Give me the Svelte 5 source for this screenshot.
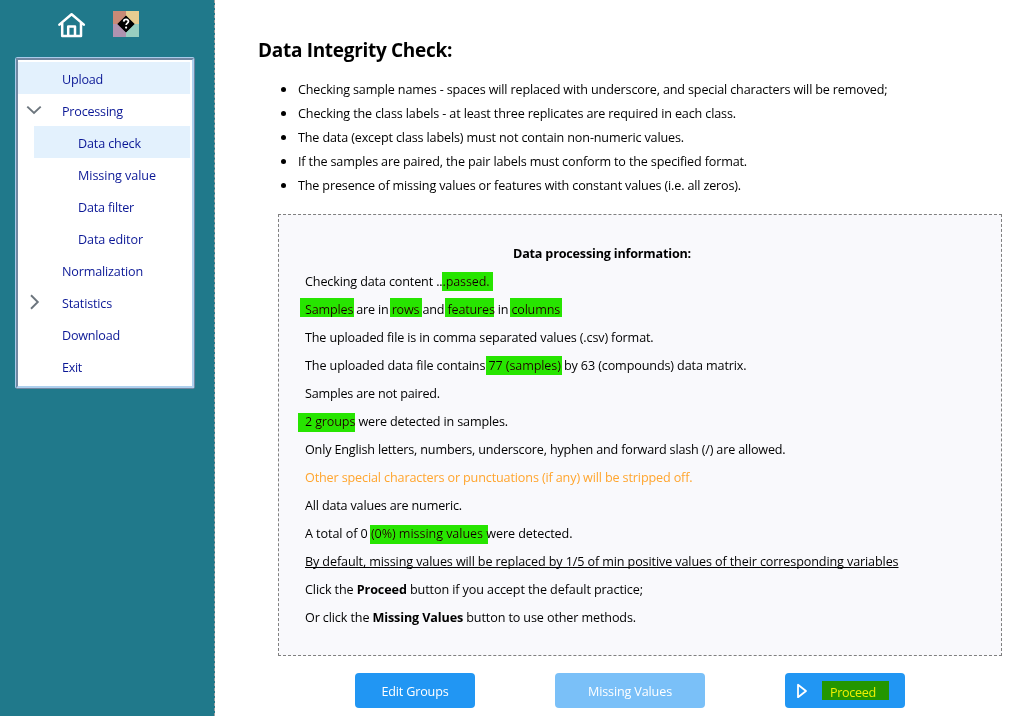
<script>
  const menu = [
    { label: 'Upload', w: 41, active: true },
    { label: 'Processing', w: 61, icon: 'down' },
    { label: 'Data check', w: 63, sub: true, active: true },
    { label: 'Missing value', w: 78, sub: true },
    { label: 'Data filter', w: 56, sub: true },
    { label: 'Data editor', w: 65, sub: true },
    { label: 'Normalization', w: 81 },
    { label: 'Statistics', w: 50, icon: 'right' },
    { label: 'Download', w: 58 },
    { label: 'Exit', w: 20 }
  ];

  const checks = [
    ['Checking sample names - spaces will replaced with underscore, and special characters will be removed;', 589.5],
    ['Checking the class labels - at least three replicates are required in each class.', 438],
    ['The data (except class labels) must not contain non-numeric values.', 386],
    ['If the samples are paired, the pair labels must conform to the specified format.', 449],
    ['The presence of missing values or features with constant values (i.e. all zeros).', 443]
  ];

  // marks: [left, top, width] of each highlighter stroke within the row
  const rows = [
    { parts: ['Checking data content ...passed.'], w: 184.5, marks: [[137, 4, 51]] },
    { parts: ['Samples are in rows and features in columns'], w: 255, marks: [[-5, 2, 54], [85, 2, 31.5], [140, 2, 49], [205, 2, 52]] },
    { parts: ['The uploaded file is in comma separated values (.csv) format.'], w: 348.5 },
    { parts: ['The uploaded data file contains 77 (samples) by 63 (compounds) data matrix.'], w: 441.5, marks: [[181, 4, 76]] },
    { parts: ['Samples are not paired.'], w: 135 },
    { parts: ['2 groups were detected in samples.'], w: 203, marks: [[-7, 5, 57]] },
    { parts: ['Only English letters, numbers, underscore, hyphen and forward slash (/) are allowed.'], w: 480.5 },
    { parts: ['Other special characters or punctuations (if any) will be stripped off.'], w: 387.5, kind: 'warn' },
    { parts: ['All data values are numeric.'], w: 157 },
    { parts: ['A total of 0 (0%) missing values were detected.'], w: 267.5, marks: [[65, 5, 118]] },
    { parts: ['By default, missing values will be replaced by 1/5 of min positive values of their corresponding variables'], w: 593.5, kind: 'under' },
    { parts: ['Click the ', 'Proceed', ' button if you accept the default practice;'], w: 338 },
    { parts: ['Or click the ', 'Missing Values', ' button to use other methods.'], w: 331 }
  ];

  // Tracks the text so that the line takes the given width.
  function fit(node, width) {
    const natural = node.getBoundingClientRect().width;
    node.style.letterSpacing = (width - natural) / node.textContent.length + 'px';
  }
</script>

<div class="page">
  <aside>
    <div class="tools">
      <svg class="home" width="28" height="26" viewBox="0 0 28 26" fill="none" stroke="#fff" stroke-width="2.5" stroke-linejoin="round" stroke-linecap="round">
        <path d="M1.4 12.6 13.6 2.2l12.2 10.4M4.2 11V24h18.8V11M10.2 23.8v-9.2h6.8v9.2" />
      </svg>
      <svg class="help" width="26" height="26" viewBox="0 0 26 26">
        <path fill="#c98a76" d="M0 0h13v13H0z" /><path fill="#e8cd91" d="M13 0h13v13H13z" />
        <path fill="#ae93b0" d="M0 13h13v13H0z" /><path fill="#98cfc0" d="M13 13h13v13H13z" />
        <path d="M13 4.9l8.2 8.1-8.2 8.1L4.8 13z" stroke="#000" stroke-linejoin="round" />
        <path d="M10.7 10.6c.2-3.1 5.1-2.7 4.7.1-.2 1.5-2.2 1.4-2.2 3.3" fill="none" stroke="#fff" stroke-width="1.8" />
        <circle cx="13.1" cy="16.6" r="1.1" fill="#fff" />
      </svg>
    </div>
    <nav><ul>
      {#each menu as m}
        <li class:active={m.active} class:sub={m.sub}>
          <span class="toggle">
            {#if m.icon}
              <svg width="16" height="16" viewBox="0 0 16 16" fill="none" stroke="#6c757d" stroke-width="1.9">
                <path d={m.icon === 'down' ? 'M1.3 4.6 8 11l6.7-6.4' : 'M5 1.3 11.8 8 5 14.7'} />
              </svg>
            {/if}
          </span>
          <span class="t" use:fit={m.w}>{m.label}</span>
        </li>
      {/each}
    </ul></nav>
  </aside>

  <main>
    <h1><span class="t" use:fit={194}>Data Integrity Check:</span></h1>
    <ul class="checks">
      {#each checks as [text, w]}<li><span class="t" use:fit={w}>{text}</span></li>{/each}
    </ul>
    <section>
      <h2><span class="t" use:fit={178}>Data processing information:</span></h2>
      {#each rows as r}
        <p class={r.kind}><span class="t" use:fit={r.w}>{#each r.parts as part, i}{#if i === 1}<b>{part}</b>{:else}{part}{/if}{/each}</span>
          {#each r.marks ?? [] as [left, top, width]}
            <i style="left:{left}px;top:{top}px;width:{width}px"></i>
          {/each}
        </p>
      {/each}
    </section>
    <div class="actions">
      <button class="edit"><span class="t" use:fit={67}>Edit Groups</span></button>
      <button class="missing"><span class="t" use:fit={84}>Missing Values</span></button>
      <button class="proceed">
        <svg width="12" height="16" viewBox="0 0 12 16" fill="none" stroke="#fff" stroke-width="1.8" stroke-linejoin="round"><path d="M2 1.8v12.4L10 8z" /></svg>
        <span class="mark"><span class="t" use:fit={46}>Proceed</span></span>
      </button>
    </div>
  </main>
</div>

<style>
  :global(body) { margin: 0; background: #fff; overflow: hidden; }
  .page { display: flex; height: 716px; font: 12.6px/28px "Open Sans", sans-serif; color: #000; }
  ul, h1, h2, p { margin: 0; padding: 0; }
  .t { display: inline-block; white-space: pre; }
  aside { box-sizing: border-box; width: 215px; background: #20798b; border-right: 1px dashed #a0a0a0; flex: none; }
  .tools { display: flex; height: 57px; padding-left: 58px; box-sizing: border-box; }
  .home { margin-top: 12px; }
  .help { margin: 11px 0 0 27px; }
  nav { box-sizing: border-box; width: 180px; height: 332px; margin-left: 15px; border: 1px solid; border-color: #a9cbea #7187a2 #7187a2 #a9cbea; border-radius: 3px; background: #fff; }
  nav ul { box-sizing: border-box; height: 100%; list-style: none; border: 2px solid; border-color: #7187a2 #aed0ee #aed0ee #7187a2; padding: 2px 2px 0 0; }
  nav li { display: flex; align-items: center; height: 32px; color: #0b1896; }
  nav li .t { line-height: 24px; padding-top: 4px; }
  nav li.sub { margin-left: 16px; }
  nav li.active { background: #e3f1fd; }
  .toggle { width: 36px; height: 16px; padding-left: 8px; flex: none; }
  .toggle svg { display: block; }
  main { flex: 1; padding: 36px 13px 0 43px; }
  h1 { font-size: 19px; line-height: 28px; font-weight: 700; }
  .checks { margin: 14px 0 0 40px; line-height: 24px; }
  .checks li { height: 24px; }
  .checks li::marker { font-size: 14px; }
  .checks .t { vertical-align: top; line-height: 22px; }
  section { box-sizing: border-box; height: 442px; margin: 16px 0 0 20px; border: 1px dashed #808080; background: #f9f9fc; padding: 25px 26px; }
  h2 { padding-right: 76px; margin: 0; font-size: 12.6px; font-weight: 700; text-align: center; height: 28px; }
  section .t { line-height: 28px; vertical-align: top; }
  p { position: relative; height: 28px; }
  .warn { color: #ffa52e; }
  .under .t { text-decoration: underline; text-underline-offset: 1px; text-decoration-skip-ink: none; }
  p i { position: absolute; height: 19px; background: #27e500; mix-blend-mode: darken; }
  .actions { display: flex; gap: 80px; margin: 17px 0 0 97px; }
  button { height: 35px; padding: 0; border: 0; border-radius: 4px; background: #2196f3; color: #fff; font: inherit; display: flex; align-items: center; justify-content: center; }
  button .t { padding-top: 2px; }
  .edit, .proceed { width: 120px; }
  .missing { width: 150px; background: #7ac0f8; }
  .proceed { justify-content: flex-start; padding-left: 11px; gap: 14px; }
  .mark { width: 67px; height: 19px; line-height: 19px; background: #239600; color: #f0f000; box-sizing: border-box; padding-left: 8px; text-align: left; }
</style>
